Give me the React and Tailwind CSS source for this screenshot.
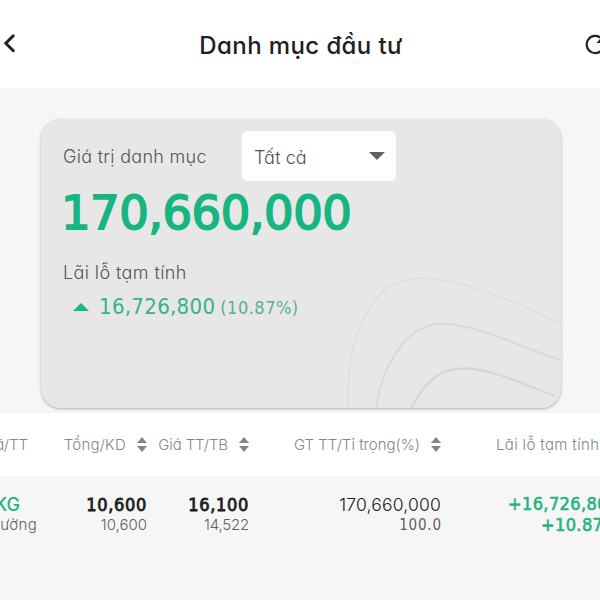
import React from 'react';

const columns = [
    { label: 'Tổng/KD', labelClass: 'tracking-[0.2px]', top: '10,600', bottom: '10,600', bottomClass: '', bold: true },
    { label: 'Giá TT/TB', labelClass: 'tracking-[-0.1px]', top: '16,100', bottom: '14,522', bottomClass: 'tracking-[-0.2px]', bold: true },
    { label: 'GT TT/Tỉ trọng(%)', labelClass: '', top: '170,660,000', bottom: '100.0', bottomClass: "font-['DejaVu_Sans_Condensed','DejaVu_Sans',sans-serif] [font-stretch:condensed] text-[14.5px] tracking-[0.8px] -mr-[0.8px]", bold: false },
];

const num = "font-['DejaVu_Sans_Condensed','DejaVu_Sans',sans-serif] [font-stretch:condensed]";

const SortIcon = () => (
    <svg className="w-[10px] h-[15px] shrink-0 -mt-[2px]" viewBox="0 0 10 15" fill="#858585">
        <path d="M5 0 10 6H0z" />
        <path d="M0 9h10L5 15z" />
    </svg>
);

const Header = () => (
    <header className="relative h-[88px] bg-white flex items-center justify-center">
        <svg className="absolute left-0 top-[32px] w-5 h-6" viewBox="0 0 20 24" fill="none" stroke="#222" strokeWidth="3" strokeLinecap="round">
            <path d="M13.3 3.8 5.8 11.3l7.5 7.4" />
        </svg>
        <h1 className="pt-[3px] pl-[2px] text-[24px] leading-8 font-medium text-[#202020] tracking-[0.4px] whitespace-nowrap">Danh mục đầu tư</h1>
        <svg className="absolute left-[580px] top-[30px] w-[28px] h-[28px]" viewBox="0 0 28 28" fill="none" stroke="#222" strokeWidth="2.2">
            <path d="M21.5 8.500A8.600 8.600 0 1 0 23.500 17" />
            <path d="M21 8v5h-4.500z" fill="#222" stroke="none" />
        </svg>
    </header>
);

const PortfolioCard = () => (
    <section className="relative w-[520px] h-[289px] ml-[40.5px] rounded-[20px] bg-[#e7e7e7] overflow-hidden shadow-[0_1px_3px_rgba(0,0,0,0.3)]">
        <svg className="absolute left-0 top-0 w-[521px] h-[290px]" viewBox="0 0 521 290" fill="none" strokeWidth="1.5">
            <path d="M307.500 290C306 250 312 216 327 192C340 170 352 160 381 159C426 160 465 181 521 204" stroke="#dcdede" />
            <path d="M335 290C340 257 350 239 364 222C376 209 388 205 402 204.500C437 206 477 227 519 241" stroke="#d5dada" strokeWidth="2" />
            <path d="M370 290C377 275 383 267 393 259C402 252 410 250 424 249.500C452 250 484 266 514 277" stroke="#cfdad9" strokeWidth="2.300" />
        </svg>
        <div className="relative pl-[22.5px] pt-[12px]">
            <div className="flex items-center">
                <span className="w-[179px] pt-px text-[18px] leading-6 font-light tracking-[0.3px] text-[#555] whitespace-nowrap">Giá trị danh mục</span>
                <button type="button" className="w-[154px] h-[50px] rounded-[6px] bg-white pl-[12px] pr-[11px] flex items-center justify-between text-[18px] font-light text-[#505050]">
                    <span className="pt-[2px]">Tất cả</span>
                    <svg className="w-4 h-2" viewBox="0 0 16 8" fill="#616161"><path d="M0 0h16L8 8z" /></svg>
                </button>
            </div>
            <div className="font-['DejaVu_Sans',sans-serif] -ml-[2px] h-[60px] pt-[2px] leading-[60px] text-[46.5px] text-[#17b581] tracking-[-0.5px] [-webkit-text-stroke:1.8px_#17b581]">170,660,000</div>
            <div className="mt-[20px] text-[18px] leading-6 font-light tracking-[0.4px] text-[#555]">Lãi lỗ tạm tính</div>
            <div className={`${num} mt-[6px] pl-[10px] h-8 flex items-center text-[#35b488]`}>
                <svg className="w-4 h-2 mr-[10px]" viewBox="0 0 16 8" fill="#17b581"><path d="M0 8h16L8 0z" /></svg>
                <span className="text-[22px] leading-8 tracking-[0.3px]">16,726,800</span>
                <span className="ml-[5px] pt-[2px] text-[18px] leading-8 tracking-[0.5px] text-[#58b18f]">(10.87%)</span>
            </div>
        </div>
    </section>
);

const Holdings = () => (
    <section>
        <div className="h-[63px] pt-[2px] bg-white grid grid-cols-[38px_109px_102px_192px_159px] items-center text-[15px] font-light text-[#858585] whitespace-nowrap">
            <div className="flex justify-end pr-[10px]">Mã/TT</div>
            {columns.map(c => (
                <div key={c.label} className="flex items-center justify-end gap-[11px]">
                    <span className={c.labelClass}>{c.label}</span>
                    <SortIcon />
                </div>
            ))}
            <div className="pl-[55px] tracking-[0.35px]">Lãi lỗ tạm tính</div>
        </div>
        <div className="h-[124px] pt-[17px] bg-[#f6f6f6] grid grid-cols-[38px_109px_102px_192px_159px] content-start whitespace-nowrap">
            <div className="flex flex-col items-end">
                <span className="pr-[18px] text-[18px] leading-6 font-medium text-[#17b581]">KG</span>
                <span className="pr-px text-[15px] leading-4 font-light tracking-[0.3px] text-[#5f5f5f]">ường</span>
            </div>
            {columns.map(c => (
                <div key={c.label} className="flex flex-col items-end">
                    {c.bold
                        ? <span className={`${num} text-[18px] leading-6 text-[#202020] tracking-[0.7px] [-webkit-text-stroke:0.8px_#202020]`}>{c.top}</span>
                        : <span className="text-[17.5px] leading-6 font-light tracking-[0.2px] text-[#202020]">{c.top}</span>}
                    <span className={`text-[15px] leading-4 font-light text-[#5f5f5f] ${c.bottomClass}`}>{c.bottom}</span>
                </div>
            ))}
            <div className={`${num} flex flex-col text-[18px] text-[#24b383] tracking-[0.4px] [-webkit-text-stroke:0.6px_#24b383]`}>
                <span className="pl-[67px] leading-[21px]">+16,726,800</span>
                <span className="pl-[100px] leading-[22px]">+10.87%</span>
            </div>
        </div>
    </section>
);

const App = () => (
    <main className="w-[600px] h-[600px] overflow-hidden bg-[#f6f6f6] font-['Inter',sans-serif] [font-feature-settings:'cv11']">
        <Header />
        <div className="h-[325px] pt-[31px] bg-[#f6f6f6]">
            <PortfolioCard />
        </div>
        <Holdings />
    </main>
);

export default App;
